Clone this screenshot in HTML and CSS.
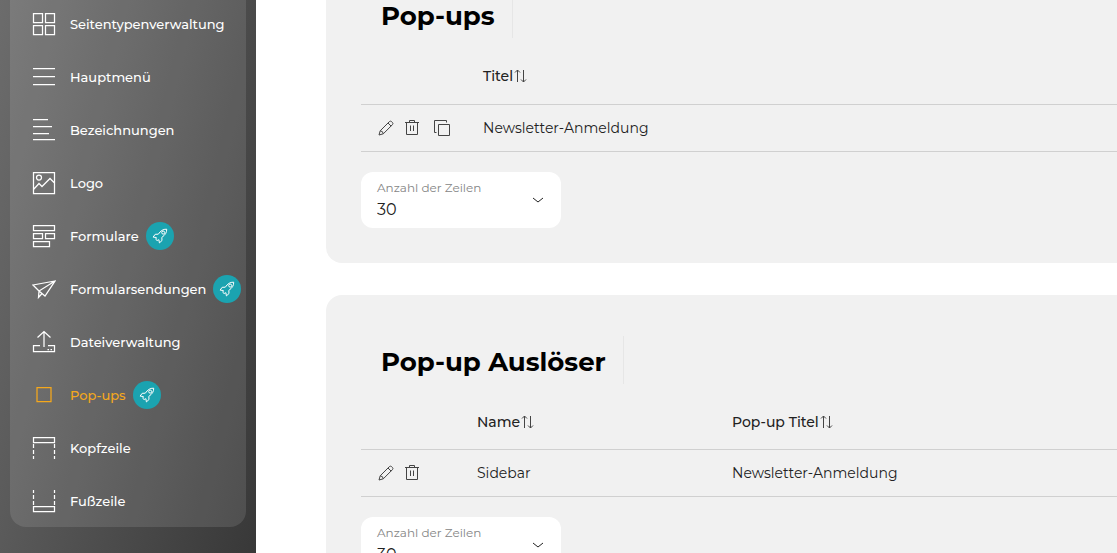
FILE: index.html
```html
<!DOCTYPE html>
<html lang="de">
<head>
<meta charset="utf-8">
<meta name="viewport" content="width=device-width, initial-scale=1">
<title>Pop-ups</title>
<link rel="stylesheet" href="styles.css">
</head>
<body>
<svg class="sprite" aria-hidden="true">
  <symbol id="rocket" viewBox="0 0 16 16"><path d="M14.7 1.2C11 1 8.6 2.800 6.300 6.200L3.200 6.300 1.100 9.100 4.300 9.500 3.900 11.500 5.100 12.500 6.900 11.700 7.400 14.900 10 12.500 9.800 9.400C13.200 7 14.800 4.600 14.700 1.200Z"/><circle cx="11.200" cy="4.600" r="1.500"/></symbol>
  <symbol id="pencil" viewBox="0 0 16 16"><path d="M1 15 2.200 10.800 11.300 1.700Q12.500.6 13.700 1.700L14.400 2.400Q15.500 3.600 14.400 4.700L5.300 13.800ZM2.200 10.800Q5 11 5.300 13.800M10 3 13.100 6.100"/></symbol>
  <symbol id="trash" viewBox="0 0 16 16"><path d="M1 2.500H15M2.500 2.500V14.500H13.500V2.500M5.500 2.500V.5H10.500V2.500M6.500 5.500V11M9.500 5.500V11"/></symbol>
  <symbol id="copy" viewBox="0 0 16 16"><path d="M4.500 4.500H15.500V15.500H4.500ZM2.500 12.500H.5V.5H12.500V2.500"/></symbol>
  <symbol id="sort" viewBox="0 0 13 14"><path d="M3.500 13V1M1 3.500 3.500 1 6 3.500M9.500 1V13M7 10.500 9.500 13 12 10.500"/></symbol>
  <symbol id="chevron" viewBox="0 0 12 6"><path d="M1 1 6 5 11 1"/></symbol>
</svg>

<div class="layout">
  <aside class="sidebar">
    <nav class="panel" aria-label="Verwaltung">
      <ul class="menu">
        <li><a class="item" href="#"><svg class="icon" viewBox="0 0 24 24"><path d="M1.500 1.500H10.500V10.500H1.500ZM13.500 1.500H22.500V10.500H13.500ZM1.500 13.500H10.500V22.500H1.500ZM13.500 13.500H22.500V22.500H13.500Z"/></svg>Seitentypenverwaltung</a></li>
        <li><a class="item" href="#"><svg class="icon" viewBox="0 0 24 24"><path d="M1 3.500H23M1 11.500H23M1 19.500H23"/></svg>Hauptmenü</a></li>
        <li><a class="item" href="#"><svg class="icon" viewBox="0 0 24 24"><path d="M1 1.500H16M1 8.500H20M1 15.500H17M1 21.500H23"/></svg>Bezeichnungen</a></li>
        <li><a class="item" href="#"><svg class="icon" viewBox="0 0 24 24"><path d="M1.500 1.500H22.500V22.500H1.500ZM1.500 18.500 7 12.500 10 15.500 18 7.500 22.500 12"/><circle cx="7" cy="6.500" r="2.500"/></svg>Logo</a></li>
        <li><a class="item" href="#"><svg class="icon" viewBox="0 0 24 24"><path d="M1.500 1.500H22.500V6.500H1.500ZM1.500 9.500H10.500V14.500H1.500ZM13.500 9.500H22.500V14.500H13.500ZM1.500 17.500H17.500V22.500H1.500Z"/></svg>Formulare<span class="badge"><svg><use href="#rocket"/></svg></span></a></li>
        <li><a class="item" href="#"><svg class="icon" viewBox="0 0 24 24"><path d="M1 8 23 4 13 19 7 14ZM1 8 7 14M23 4 7 14 6.500 20.500 10 16.500"/></svg>Formularsendungen<span class="badge"><svg><use href="#rocket"/></svg></span></a></li>
        <li><a class="item" href="#"><svg class="icon" viewBox="0 0 24 24"><path d="M8 15.500H1.500V21.500H22.500V15.500H16M12 17V1.500M5.500 7.500 12 1.500 18.500 7.500M15.500 19.500H17M18.500 19.500H20"/></svg>Dateiverwaltung</a></li>
        <li><a class="item item-active" href="#" aria-current="page"><svg class="icon" viewBox="0 0 24 24"><path d="M5 4.500H19V18.500H5Z"/></svg>Pop-ups<span class="badge"><svg><use href="#rocket"/></svg></span></a></li>
        <li><a class="item" href="#"><svg class="icon" viewBox="0 0 24 24"><path d="M1.500 1.500H22.500V6.500H1.500Z"/><path stroke-dasharray="4 2" d="M1.500 8V23M22.500 8V23"/></svg>Kopfzeile</a></li>
        <li><a class="item" href="#"><svg class="icon" viewBox="0 0 24 24"><path d="M1.500 17.500H22.500V22.500H1.500Z"/><path stroke-dasharray="4 2" d="M1.500 16V1M22.500 16V1"/></svg>Fußzeile</a></li>
      </ul>
    </nav>
  </aside>

  <main class="content">
    <section class="card">
      <header class="card-head"><h2>Pop-ups</h2></header>
      <table class="grid popups">
        <colgroup><col class="col-actions"><col></colgroup>
        <thead><tr><td></td><th scope="col"><button class="sort" type="button">Titel<svg><use href="#sort"/></svg></button></th></tr></thead>
        <tbody><tr>
          <td><div class="actions">
            <button type="button" aria-label="Bearbeiten"><svg><use href="#pencil"/></svg></button>
            <button type="button" aria-label="Löschen"><svg><use href="#trash"/></svg></button>
            <button class="duplicate" type="button" aria-label="Duplizieren"><svg><use href="#copy"/></svg></button>
          </div></td>
          <td>Newsletter-Anmeldung</td>
        </tr></tbody>
      </table>
      <div class="field">
        <label for="rows-popups">Anzahl der Zeilen</label>
        <select id="rows-popups"><option>30</option><option>50</option></select>
        <svg class="chevron" aria-hidden="true"><use href="#chevron"/></svg>
      </div>
    </section>

    <section class="card">
      <header class="card-head"><h2>Pop-up Auslöser</h2></header>
      <table class="grid triggers">
        <colgroup><col class="col-actions"><col class="col-name"><col></colgroup>
        <thead><tr><td></td><th scope="col"><button class="sort" type="button">Name<svg><use href="#sort"/></svg></button></th><th scope="col"><button class="sort" type="button">Pop-up Titel<svg><use href="#sort"/></svg></button></th></tr></thead>
        <tbody><tr>
          <td><div class="actions">
            <button type="button" aria-label="Bearbeiten"><svg><use href="#pencil"/></svg></button>
            <button type="button" aria-label="Löschen"><svg><use href="#trash"/></svg></button>
          </div></td>
          <td>Sidebar</td>
          <td>Newsletter-Anmeldung</td>
        </tr></tbody>
      </table>
      <div class="field">
        <label for="rows-triggers">Anzahl der Zeilen</label>
        <select id="rows-triggers"><option>30</option><option>50</option></select>
        <svg class="chevron" aria-hidden="true"><use href="#chevron"/></svg>
      </div>
    </section>
  </main>
</div>
</body>
</html>
```
FILE: styles.css
```css
* { box-sizing: border-box; }

body {
  margin: 0;
  background: #fff;
  color: #222;
  font-family: Montserrat, Inter, "Open Sans", sans-serif;
  font-size: 14px;
}

svg {
  fill: none;
  stroke: currentColor;
}

button, select { font: inherit; color: inherit; }

button {
  padding: 0;
  border: 0;
  background: none;
  cursor: pointer;
}

.sprite {
  position: absolute;
  width: 0;
  height: 0;
}

.layout {
  display: flex;
  height: 100vh;
  overflow: hidden;
}

/* Sidebar */
.sidebar {
  flex: 0 0 256px;
  min-width: 0;
  padding: 0 10px;
  background: linear-gradient(104deg, #6c6c6c, #383838);
}

.panel {
  padding: 12px 0 14px 22px;
  border-radius: 0 0 16px 16px;
  background: rgba(255, 255, 255, 0.11);
}

.menu {
  display: grid;
  gap: 29px;
  margin: 0;
  padding: 0;
  list-style: none;
}

.item {
  display: flex;
  align-items: center;
  height: 24px;
  color: #fff;
  font-size: 13px;
  font-weight: 500;
  text-decoration: none;
  white-space: nowrap;
}

.item-active { color: #f5a81c; }

.icon {
  width: 24px;
  height: 24px;
  margin-right: 14px;
  stroke-width: 1.25;
}

.badge {
  display: grid;
  place-items: center;
  flex: none;
  width: 28px;
  height: 28px;
  margin-left: 7px;
  border-radius: 50%;
  background: #1ba3b0;
  color: #fff;
}

.badge svg {
  width: 16px;
  height: 16px;
}

/* Content, scrolled into the first card */
.content {
  flex: 1;
  min-width: 0;
  display: flex;
  flex-direction: column;
  gap: 32px;
  margin-top: -51px;
  padding-left: 70px;
}

.card {
  flex: none;
  padding: 41px 0 35px 35px;
  border-radius: 16px 0 0 16px;
  background: #f1f1f1;
}

.card-head {
  display: flex;
  height: 48px;
}

.card-head h2 {
  margin: 0;
  padding: 0 17px 0 20px;
  border-right: 1px solid #e6e6e6;
  color: #000;
  font-size: 26px;
  font-weight: 700;
  line-height: 52px;
}

.grid {
  width: 100%;
  margin: 9px 0 20px;
  border-collapse: collapse;
  table-layout: fixed;
  text-align: left;
}

.grid th, .grid td {
  height: 47px;
  padding: 0;
  border-bottom: 1px solid #d0d0d0;
}

.grid thead th, .grid thead td {
  height: 57px;
  padding-top: 2px;
}

.popups .col-actions { width: 122px; }
.triggers .col-actions { width: 116px; }
.triggers .col-name { width: 255px; }

.sort {
  display: flex;
  align-items: center;
  gap: 1px;
  font-weight: 500;
}

.sort svg {
  width: 13px;
  height: 14px;
  color: #444;
}

.actions {
  display: flex;
  gap: 10px;
  padding-left: 17px;
}

.actions button {
  display: flex;
  color: #444;
}

.actions svg {
  width: 16px;
  height: 16px;
}

.actions .duplicate { margin-left: 4px; }

.field {
  position: relative;
  width: 200px;
  height: 56px;
  border-radius: 12px;
  background: #fff;
}

.field label {
  position: absolute;
  top: 8px;
  left: 16px;
  color: #858585;
  font-size: 12px;
  line-height: 16px;
}

.field select {
  width: 100%;
  height: 100%;
  padding: 19px 40px 0 16px;
  border: 0;
  border-radius: 12px;
  background: transparent;
  font-size: 16px;
  appearance: none;
}

.chevron {
  position: absolute;
  top: 25px;
  right: 17px;
  width: 12px;
  height: 6px;
  pointer-events: none;
}
```
